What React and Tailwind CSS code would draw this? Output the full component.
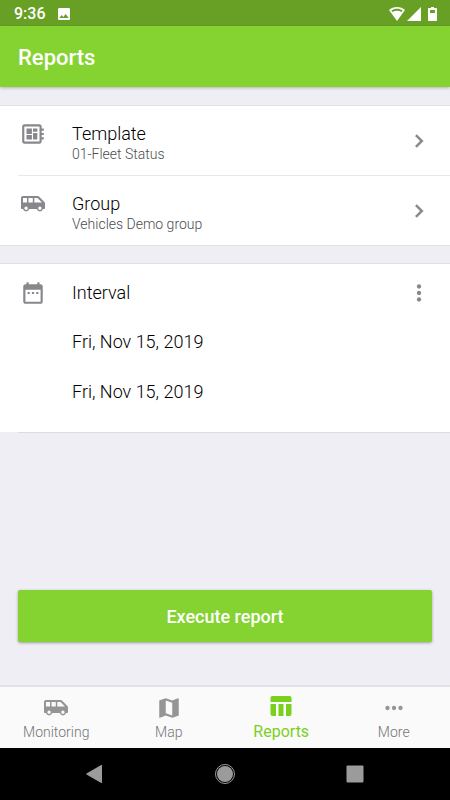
import React from 'react';

const Icon = ({ className = 'size-[26px]', viewBox = '0 0 24 24', children }) => (
  <svg className={`block shrink-0 ${className}`} viewBox={viewBox} fill="currentColor" aria-hidden="true">
    {children}
  </svg>
);

const BoardIcon = () => (
  <Icon>
    <path d="M22 9V7h-2V5c0-1.1-.9-2-2-2H4c-1.1 0-2 .9-2 2v14c0 1.1.9 2 2 2h14c1.1 0 2-.9 2-2v-2h2v-2h-2v-2h2v-2h-2V9h2zm-4 10H4V5h14v14zM6 13h5v4H6zm6-6h4v3h-4zM6 7h5v5H6zm6 4h4v6h-4z" />
  </Icon>
);

const VanIcon = () => (
  <Icon viewBox="0 0 26 26">
    <path
      fillRule="evenodd"
      d="M3 5h14.600c.5 0 1 .2 1.400.600L24.400 11c.4.400.6.900.6 1.400V17c0 .6-.4 1-1 1h-1a3.200 3.200 0 0 1-6.200 0H9.200A3.200 3.200 0 0 1 3 18H2c-.6 0-1-.4-1-1V7c0-1.100.9-2 2-2zM3 7v4.500h4V7zm5.500 0v4.500h4.300V7zm5.800 0v4.500h7.700L17.500 7zM6.100 15.600a1.700 1.700 0 1 0 0 3.400 1.700 1.700 0 0 0 0-3.400zm13.800 0a1.700 1.700 0 1 0 0 3.400 1.700 1.700 0 0 0 0-3.400z"
    />
  </Icon>
);

const CalendarIcon = () => (
  <Icon>
    <path d="M9 11H7v2h2v-2zm4 0h-2v2h2v-2zm4 0h-2v2h2v-2zm2-7h-1V2h-2v2H8V2H6v2H5c-1.110 0-1.990.9-1.990 2L3 20c0 1.100.89 2 2 2h14c1.100 0 2-.9 2-2V6c0-1.100-.9-2-2-2zm0 16H5V9h14v11z" />
  </Icon>
);

const ChevronIcon = () => (
  <Icon>
    <path d="M10 6 8.590 7.410 13.170 12l-4.580 4.590L10 18l6-6z" stroke="currentColor" strokeWidth="0.400" />
  </Icon>
);

const DotsIcon = ({ vertical }) => (
  <Icon>
    <circle cx={vertical ? 12 : 6} cy={vertical ? 6 : 12} r="2" />
    <circle cx="12" cy="12" r="2" />
    <circle cx={vertical ? 12 : 18} cy={vertical ? 18 : 12} r="2" />
  </Icon>
);

const MapIcon = () => (
  <Icon>
    <path d="M20.500 3l-.16.030L15 5.100 9 3 3.360 4.900c-.21.070-.36.250-.36.480V20.500c0 .28.220.5.500.5l.16-.030L9 18.900l6 2.100 5.640-1.900c.21-.07.360-.25.360-.48V3.500c0-.28-.22-.5-.5-.5zM15 19l-6-2.110V5l6 2.110V19z" />
  </Icon>
);

const TableIcon = () => (
  <Icon viewBox="0 0 26 26">
    <path d="M4.500 3h17c1.100 0 2 .9 2 2v4h-21V5c0-1.100.9-2 2-2zM2.500 11h5.500v12H4.500c-1.100 0-2-.9-2-2zM10.500 11h5v12h-5zM18 11h5.500v10c0 1.100-.9 2-2 2H18z" />
  </Icon>
);

const rows = [
  { title: 'Template', value: '01-Fleet Status', icon: BoardIcon },
  { title: 'Group', value: 'Vehicles Demo group', icon: VanIcon },
];

const dates = ['Fri, Nov 15, 2019', 'Fri, Nov 15, 2019'];

const tabs = [
  { label: 'Monitoring', icon: VanIcon },
  { label: 'Map', icon: MapIcon },
  { label: 'Reports', icon: TableIcon, active: true },
  { label: 'More', icon: DotsIcon },
];

const StatusBar = () => (
  <div className="flex h-[26px] items-center bg-[#67a024] pl-3.5 pr-[13px] pt-px text-white">
    <span className="text-base font-medium">9:36</span>
    <Icon className="ml-2.5 size-4">
      <path d="M21 19V5c0-1.100-.9-2-2-2H5c-1.100 0-2 .9-2 2v14c0 1.100.9 2 2 2h14c1.100 0 2-.9 2-2zM8.500 13.500l2.500 3.010L14.500 12l4.500 6H5l3.500-4.500z" />
    </Icon>
    <Icon className="ml-auto h-3.5 w-4" viewBox="0 0 16 14">
      <path
        fillRule="evenodd"
        d="M8 0c3.100 0 5.900 1.200 8 3L8 14 0 3c2.100-1.800 4.900-3 8-3zm0 1.800c-2 0-4 .6-5.600 1.600l1.100 1.500C4.800 4.200 6.300 3.800 8 3.800s3.200.4 4.500 1.100l1.100-1.500C12 2.400 10 1.800 8 1.800z"
      />
    </Icon>
    <Icon className="ml-0.5 size-3.5" viewBox="0 0 14 14">
      <path d="M14 0v14H0z" />
    </Icon>
    <Icon className="ml-[7px] h-3.5 w-[9px]" viewBox="0 0 9 14">
      <path fillRule="evenodd" d="M3 0h3v1h2c.6 0 1 .4 1 1v11c0 .6-.4 1-1 1H1c-.6 0-1-.4-1-1V2c0-.6.4-1 1-1h2zM2 3v3h5V3z" />
    </Icon>
  </div>
);

const App = () => {
  return (
    <div className="flex min-h-screen flex-col bg-[#efeef4] font-[Roboto,sans-serif] text-black">
      <StatusBar />

      <header className="z-10 flex h-[61px] items-center bg-[#85d331] px-[18px] pt-0.5 text-white shadow-[0_1px_3px_rgba(0,0,0,0.25)]">
        <h1 className="text-[22px] font-medium">Reports</h1>
      </header>

      <main className="flex flex-1 flex-col pt-[18px]">
        {/* Report parameters */}
        <section className="border-y border-[#e2e1e6] bg-white">
          {rows.map(({ title, value, icon: RowIcon }, idx) => (
            <div key={title} className="pl-[18px]">
              <button
                type="button"
                className={`flex w-full items-center pl-0.5 pr-[18px] text-left text-[#88878c] ${idx > 0 ? 'h-[70px] border-t border-[#e8e8ea]' : 'h-[69px]'}`}
              >
                <span className="mr-[26px] -mt-3.5">
                  <RowIcon />
                </span>
                <span className="flex flex-1 flex-col pt-1">
                  <span className="text-lg leading-[22px] font-light text-black">{title}</span>
                  <span className="text-sm leading-[18px] font-light text-[#4c4c4f]">{value}</span>
                </span>
                <ChevronIcon />
              </button>
            </div>
          ))}
        </section>

        {/* Interval */}
        <section className="mt-[17px] border-t border-[#e2e1e6] bg-white pb-[15px]">
          <div className="flex h-[53px] items-center pl-5 pr-[18px] pt-1 text-[#88878c]">
            <CalendarIcon />
            <h2 className="ml-[26px] flex-1 text-lg font-light text-black">Interval</h2>
            <button type="button" aria-label="Interval options">
              <DotsIcon vertical />
            </button>
          </div>
          {dates.map((date, idx) => (
            <button key={idx} type="button" className="flex h-[50px] w-full items-center pl-[72px] text-left text-lg font-light">
              {date}
            </button>
          ))}
        </section>
        <hr className="ml-[18px] border-[#dddce1]" />

        <button
          type="button"
          className="mx-[18px] mb-[43px] mt-auto h-[52px] rounded-xs bg-[#85d331] pt-0.5 text-lg font-medium text-white shadow-[0_1px_3px_rgba(0,0,0,0.35)]"
        >
          Execute report
        </button>
      </main>

      <nav className="flex h-[63px] border-t-2 border-[#e2e1e6] bg-[#fafafa]">
        {tabs.map(({ label, icon: TabIcon, active }) => (
          <a
            key={label}
            href="#"
            className={`flex flex-1 flex-col items-center ${active ? 'pt-1.5 text-base text-[#7bd01f]' : 'pt-2 text-sm text-[#959595]'}`}
          >
            <TabIcon />
            <span className={active ? 'leading-[26px]' : 'leading-[22px] font-light text-[#757575]'}>{label}</span>
          </a>
        ))}
      </nav>

      {/* System navigation */}
      <div className="flex h-[52px] items-center justify-center gap-[108px] bg-black text-[#9b9b9b]">
        <button type="button" aria-label="Back">
          <Icon className="size-[22px]" viewBox="0 0 22 22">
            <path d="M18 2.500v17c0 .4-.4.600-.8.400L2.500 11.500c-.4-.2-.4-.8 0-1L17.200 2.100c.4-.2.8 0 .8.400z" />
          </Icon>
        </button>
        <button type="button" aria-label="Home">
          <Icon className="size-[22px]" viewBox="0 0 22 22">
            <circle cx="11" cy="11" r="8" />
            <circle cx="11" cy="11" r="9.500" fill="none" stroke="currentColor" />
          </Icon>
        </button>
        <button type="button" aria-label="Recents">
          <Icon className="size-[22px]" viewBox="0 0 22 22">
            <rect x="2.500" y="2.500" width="17" height="17" rx="1" />
          </Icon>
        </button>
      </div>
    </div>
  );
};

export default App;
